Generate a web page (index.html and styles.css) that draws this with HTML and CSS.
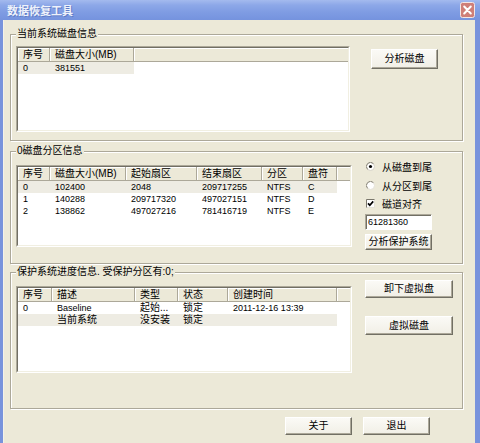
FILE: index.html
```html
<!DOCTYPE html>
<html>
<head>
<meta charset="utf-8">
<title>数据恢复工具</title>
<link rel="stylesheet" href="styles.css">
</head>
<body>
<div class="win">
  <div class="titlebar">
    <span class="title">数据恢复工具</span>
    <span class="close">
      <svg width="15" height="16" viewBox="0 0 15 16"><rect x="0.5" y="0.5" width="14" height="15" rx="2" fill="#cf7f78" stroke="#f3e6e4"/><path d="M4.2 4.5L10.8 11.5M10.8 4.5L4.2 11.5" stroke="#fff" stroke-width="2" stroke-linecap="round"/></svg>
    </span>
  </div>
  <div class="client">
    <fieldset class="group g1">
      <legend>当前系统磁盘信息</legend>
      <div class="gbody">
        <div class="list l1">
          <div class="lv">
            <div class="hdr">
              <div class="hc c1">序号</div>
              <div class="hc c2">磁盘大小(MB)</div>
              <div class="hc fill"></div>
            </div>
            <div class="row sel">
              <div class="c1 t">0</div>
              <div class="c2 t">381551</div>
            </div>
          </div>
        </div>
        <div class="btn b-analyze">分析磁盘</div>
      </div>
    </fieldset>

    <fieldset class="group g2">
      <legend>0磁盘分区信息</legend>
      <div class="gbody">
        <div class="list l2">
          <div class="lv">
            <div class="hdr">
              <div class="hc c1">序号</div>
              <div class="hc c2">磁盘大小(MB)</div>
              <div class="hc c3">起始扇区</div>
              <div class="hc c4">结束扇区</div>
              <div class="hc c5">分区</div>
              <div class="hc c6">盘符</div>
              <div class="hc fill"></div>
            </div>
            <div class="row sel">
              <div class="c1 t">0</div>
              <div class="c2 t">102400</div>
              <div class="c3 t">2048</div>
              <div class="c4 t">209717255</div>
              <div class="c5 t">NTFS</div>
              <div class="c6 t">C</div>
            </div>
            <div class="row">
              <div class="c1 t">1</div>
              <div class="c2 t">140288</div>
              <div class="c3 t">209717320</div>
              <div class="c4 t">497027151</div>
              <div class="c5 t">NTFS</div>
              <div class="c6 t">D</div>
            </div>
            <div class="row">
              <div class="c1 t">2</div>
              <div class="c2 t">138862</div>
              <div class="c3 t">497027216</div>
              <div class="c4 t">781416719</div>
              <div class="c5 t">NTFS</div>
              <div class="c6 t">E</div>
            </div>
          </div>
        </div>
        <div class="opts">
          <div class="opt">
            <svg class="mark" width="9" height="9" viewBox="0 0 9 9"><circle cx="4.5" cy="4.5" r="4" fill="#fff" stroke="#d6d3c6"/><path d="M1.6 7.4A4 4 0 0 1 7.4 1.6" fill="none" stroke="#8a877a"/><circle cx="4.5" cy="4.5" r="1.6" fill="#000"/></svg>
            <span>从磁盘到尾</span>
          </div>
          <div class="opt o2">
            <svg class="mark" width="9" height="9" viewBox="0 0 9 9"><circle cx="4.5" cy="4.5" r="4" fill="#fff" stroke="#e4e2d8"/><path d="M1.6 7.4A4 4 0 0 1 7.4 1.6" fill="none" stroke="#8a877a"/></svg>
            <span>从分区到尾</span>
          </div>
          <div class="opt o3">
            <svg class="mark" width="9" height="9" viewBox="0 0 9 9"><rect x="0.5" y="0.5" width="8" height="8" fill="#fff" stroke="#e4e2d8"/><path d="M0.5 8.5V0.5H8.5" fill="none" stroke="#7a776b"/><path d="M2 4.3L3.8 6.2L7.2 2.4" fill="none" stroke="#000" stroke-width="1.7"/></svg>
            <span>磁道对齐</span>
          </div>
          <div class="field">61281360</div>
          <div class="btn b-protect">分析保护系统</div>
        </div>
      </div>
    </fieldset>

    <fieldset class="group g3">
      <legend>保护系统进度信息. 受保护分区有:0;</legend>
      <div class="gbody">
        <div class="list l3">
          <div class="lv">
            <div class="hdr">
              <div class="hc c1">序号</div>
              <div class="hc c2">描述</div>
              <div class="hc c3">类型</div>
              <div class="hc c4">状态</div>
              <div class="hc c5">创建时间</div>
              <div class="hc fill"></div>
            </div>
            <div class="row">
              <div class="c1 t">0</div>
              <div class="c2 t">Baseline</div>
              <div class="c3">起始...</div>
              <div class="c4">锁定</div>
              <div class="c5 t">2011-12-16 13:39</div>
            </div>
            <div class="row sel">
              <div class="c1"></div>
              <div class="c2">当前系统</div>
              <div class="c3">没安装</div>
              <div class="c4">锁定</div>
              <div class="c5"></div>
            </div>
          </div>
        </div>
        <div class="vbtns">
          <div class="btn b-unmount">卸下虚拟盘</div>
          <div class="btn b-vdisk">虚拟磁盘</div>
        </div>
      </div>
    </fieldset>

    <div class="footer">
      <div class="btn b-foot">关于</div>
      <div class="btn b-foot">退出</div>
    </div>
  </div>
</div>
</body>
</html>
```
FILE: styles.css
```css
* { box-sizing: border-box; }
html, body { margin: 0; padding: 0; }
body {
  width: 480px;
  height: 443px;
  overflow: hidden;
  font-family: "Liberation Sans", "Noto Sans CJK SC", sans-serif;
  font-size: 10px;
  color: #000;
  background: #7b97e0;
}
.win {
  display: flex;
  flex-direction: column;
  height: 443px;
  background: #7893dc;
}
.titlebar {
  height: 20px;
  flex: none;
  display: flex;
  align-items: center;
  padding: 0 5px 0 7px;
  background: linear-gradient(#a4baee, #8da8e8 25%, #7f9ce3 60%, #7593de);
}
.title {
  font-family: "Noto Sans CJK SC", sans-serif;
  font-weight: bold;
  font-size: 11px;
  line-height: 14px;
  color: #eef2fb;
  text-shadow: 1px 1px 0 #5e7bc6;
}
.close {
  margin-left: auto;
  display: flex;
  margin-top: -1px;
}
.client {
  flex: 1;
  margin: 0 5px 0 3px;
  background: #ece9d8;
  display: flex;
  flex-direction: column;
  box-shadow: inset 1px 0 0 #f4f2e8;
}

/* group boxes */
.group {
  margin: 0 0 0 7px;
  width: 453px;
  min-width: 0;
  padding: 0 5px;
  border: 1px solid #aca899;
  box-shadow: inset 1px 1px 0 #fff, 1px 1px 0 #fff;
}
.group legend {
  padding: 0 1px;
  height: 12px;
  line-height: 12px;
  font-size: 10px;
  background: #ece9d8;
}
.g1 { margin-top: 8px; }
.g2 { margin-top: 4px; }
.g3 { margin-top: 2px; }
.gbody {
  display: flex;
  align-items: flex-start;
}
.g1 .gbody { height: 100px; }
.g2 .gbody { height: 106px; }
.g3 .gbody { height: 130px; }

/* list views */
.list {
  border: 1px solid;
  border-color: #aca899 #fff #fff #aca899;
  background: #fff;
}
.lv {
  height: 100%;
  border: 1px solid;
  border-color: #716f64 #f1efe2 #f1efe2 #716f64;
  overflow: hidden;
}
.l1 { width: 334px; height: 86px; margin-top: 6px; }
.l2 { width: 336px; height: 82px; margin-top: 8px; }
.l3 { width: 336px; height: 87px; margin-top: 8px; }

.hdr {
  display: flex;
  height: 14px;
  background: #ece9d8;
  border-bottom: 1px solid #aca899;
}
.hc {
  height: 13px;
  line-height: 13px;
  padding-left: 5px;
  white-space: nowrap;
  overflow: hidden;
  border-right: 1px solid #aca899;
  box-shadow: inset 1px 1px 0 #fff;
}
.hc.fill { flex: 1; border-right: 0; }
.row {
  display: flex;
  width: max-content;
  height: 12px;
  line-height: 12px;
}
.row.sel { background: #eeece3; }
.row > div {
  padding-left: 5px;
  white-space: nowrap;
  overflow: hidden;
}
.row .t { font-size: 9px; }

.l1 .c1 { width: 32px; }
.l1 .c2 { width: 84px; }

.l2 .c1 { width: 32px; }
.l2 .c2 { width: 76px; }
.l2 .c3 { width: 71px; }
.l2 .c4 { width: 65px; }
.l2 .c5 { width: 41px; }
.l2 .c6 { width: 34px; }

.l3 .c1 { width: 34px; }
.l3 .c2 { width: 83px; }
.l3 .c3 { width: 43px; }
.l3 .c4 { width: 50px; }
.l3 .c5 { width: 109px; }

/* buttons */
.btn {
  display: flex;
  align-items: center;
  justify-content: center;
  white-space: nowrap;
  font-size: 10px;
  line-height: 12px;
  background: linear-gradient(#fbfaf6, #f1efe6);
  border: 1px solid;
  border-color: #fff #716f64 #716f64 #fff;
  box-shadow: inset -1px -1px 0 #aca899;
}
.b-analyze { width: 67px; height: 20px; margin: 9px 0 0 21px; }

.opts {
  width: 67px;
  margin: 3px 0 0 13px;
  display: flex;
  flex-direction: column;
}
.opt {
  display: flex;
  align-items: center;
  height: 12px;
  padding-left: 1px;
  white-space: nowrap;
}
.opt .mark { flex: none; margin-right: 7px; }
.o2 { margin-top: 7px; }
.o3 { margin-top: 6px; }
.field {
  margin-top: 5px;
  height: 16px;
  width: 67px;
  padding-left: 2px;
  background: #fff;
  border: 1px solid;
  border-color: #aca899 #fff #fff #aca899;
  box-shadow: inset 1px 1px 0 #716f64;
  font-size: 9px;
  line-height: 14px;
}
.b-protect { margin-top: 4px; width: 67px; height: 16px; }

.vbtns {
  margin: 2px 0 0 13px;
  display: flex;
  flex-direction: column;
}
.b-unmount { width: 88px; height: 18px; }
.b-vdisk { width: 88px; height: 19px; margin-top: 18px; }

.footer {
  display: flex;
  justify-content: flex-end;
  gap: 11px;
  margin-top: 8px;
  padding-right: 45px;
}
.b-foot { width: 67px; height: 18px; }
```
